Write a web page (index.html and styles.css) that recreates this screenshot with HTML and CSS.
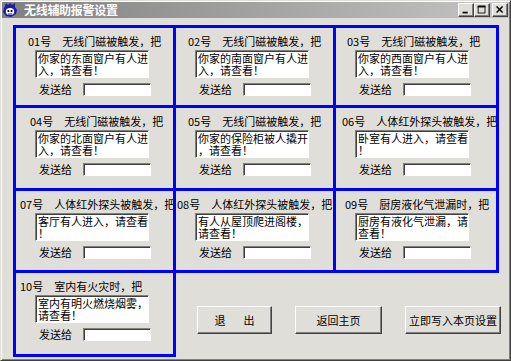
FILE: index.html
```html
<!DOCTYPE html>
<html lang="zh-CN">
<head>
<meta charset="utf-8">
<title>无线辅助报警设置</title>
<link rel="stylesheet" href="styles.css">
</head>
<body>
<div class="window">
  <div class="titlebar">
    <svg class="app-icon" viewBox="0 0 14 14" aria-hidden="true">
      <path d="M2 3 L3 0 L5 2 L7 0 L9 2 L12 0 L12 4 L14 7 L13 11 L8 14 L3 13 L0 9 L1 5 Z" fill="#1c1ca8"/>
      <ellipse cx="7" cy="8.5" rx="4.2" ry="3.6" fill="#fff"/>
      <circle cx="5.4" cy="8" r="1.1" fill="#000"/>
      <circle cx="8.6" cy="8" r="1.1" fill="#000"/>
      <path d="M5 11 L9 11" stroke="#1c1ca8" stroke-width="1"/>
    </svg>
    <span class="title">无线辅助报警设置</span>
    <div class="caption-btns">
      <span class="cbtn"><svg viewBox="0 0 16 14"><rect x="4" y="9" width="6" height="2" fill="#000"/></svg></span>
      <span class="cbtn"><svg viewBox="0 0 16 14"><rect x="3.5" y="2.5" width="8" height="8" fill="none" stroke="#000"/><rect x="3" y="2" width="9" height="2" fill="#000"/></svg></span>
      <span class="cbtn cbtn-close"><svg viewBox="0 0 16 14"><path d="M4 3 L11 10 M11 3 L4 10" stroke="#000" stroke-width="1.8"/></svg></span>
    </div>
  </div>

  <div class="grid">
    <section class="cell">
      <div class="lbl"><span class="num">01号</span>无线门磁被触发，把</div>
      <div class="memo">你家的东面窗户有人进入，请查看！</div>
      <div class="send"><span class="send-lbl">发送给</span><div class="field"></div></div>
    </section>
    <section class="cell">
      <div class="lbl"><span class="num">02号</span>无线门磁被触发，把</div>
      <div class="memo">你家的南面窗户有人进入，请查看！</div>
      <div class="send"><span class="send-lbl">发送给</span><div class="field"></div></div>
    </section>
    <section class="cell">
      <div class="lbl lbl-11"><span class="num">03号</span>无线门磁被触发，把</div>
      <div class="memo">你家的西面窗户有人进入，请查看！</div>
      <div class="send"><span class="send-lbl">发送给</span><div class="field"></div></div>
    </section>

    <section class="cell">
      <div class="lbl lbl-14"><span class="num">04号</span>无线门磁被触发，把</div>
      <div class="memo">你家的北面窗户有人进入，请查看！</div>
      <div class="send"><span class="send-lbl">发送给</span><div class="field"></div></div>
    </section>
    <section class="cell">
      <div class="lbl"><span class="num">05号</span>无线门磁被触发，把</div>
      <div class="memo">你家的保险柜被人撬开，请查看！</div>
      <div class="send"><span class="send-lbl">发送给</span><div class="field"></div></div>
    </section>
    <section class="cell">
      <div class="lbl lbl-6"><span class="num">06号</span>人体红外探头被触发，把</div>
      <div class="memo">卧室有人进入，请查看！</div>
      <div class="send"><span class="send-lbl">发送给</span><div class="field"></div></div>
    </section>

    <section class="cell">
      <div class="lbl lbl-4"><span class="num">07号</span>人体红外探头被触发，把</div>
      <div class="memo">客厅有人进入，请查看！</div>
      <div class="send"><span class="send-lbl">发送给</span><div class="field"></div></div>
    </section>
    <section class="cell">
      <div class="lbl lbl-1"><span class="num">08号</span>人体红外探头被触发，把</div>
      <div class="memo">有人从屋顶爬进阁楼，请查看！</div>
      <div class="send"><span class="send-lbl">发送给</span><div class="field"></div></div>
    </section>
    <section class="cell">
      <div class="lbl lbl-9"><span class="num">09号</span>厨房液化气泄漏时，把</div>
      <div class="memo">厨房有液化气泄漏，请查看！</div>
      <div class="send"><span class="send-lbl">发送给</span><div class="field"></div></div>
    </section>

    <section class="cell">
      <div class="lbl lbl-4"><span class="num">10号</span>室内有火灾时，把</div>
      <div class="memo">室内有明火燃烧烟雾，请查看！</div>
      <div class="send"><span class="send-lbl">发送给</span><div class="field"></div></div>
    </section>

    <div class="actions">
      <button class="btn btn-exit">退<span class="sp"></span>出</button>
      <button class="btn btn-home">返回主页</button>
      <button class="btn btn-save">立即写入本页设置</button>
    </div>
  </div>
</div>
</body>
</html>
```

FILE: styles.css
```css
* {
  box-sizing: border-box;
}

html,
body {
  margin: 0;
  padding: 0;
}

body {
  width: 511px;
  height: 361px;
  overflow: hidden;
  background: #e0ded8;
  font-family: "Noto Sans CJK SC", "Noto Sans", sans-serif;
  font-size: 11px;
  color: #000;
}

.window {
  width: 511px;
  height: 361px;
  padding: 1px;
  background: #e0ded8;
  border: 1px solid;
  border-color: #e0ded8 #404040 #404040 #e0ded8;
  box-shadow: inset 1px 1px #ffffff, inset -1px -1px #808080;
}

/* title bar */
.titlebar {
  display: flex;
  align-items: center;
  height: 16px;
  padding: 0 1px 0 1px;
  background: linear-gradient(to right, #808080, #c4c4c4);
}

.app-icon {
  width: 14px;
  height: 14px;
  margin-right: 7px;
  flex: none;
}

.title {
  color: #fff;
  font-weight: bold;
  font-size: 12px;
  line-height: 16px;
  letter-spacing: -0.3px;
}

.caption-btns {
  margin-left: auto;
  display: flex;
}

.cbtn {
  width: 16px;
  height: 14px;
  background: #e0ded8;
  border: 1px solid;
  border-color: #ffffff #404040 #404040 #ffffff;
  box-shadow: inset -1px -1px #808080;
  display: flex;
}

.cbtn svg {
  width: 14px;
  height: 12px;
}

.cbtn-close {
  margin-left: 2px;
}

/* grid of alarm cells */
.grid {
  display: grid;
  grid-template-columns: 160px 160px 163px;
  grid-template-rows: 80px 83px 82px 84px;
  margin: 10px 0 0 14px;
}

.cell {
  margin: -3px 0 0 -3px;
  border: 3px solid #0000ff;
  padding-top: 7px;
}

.lbl {
  line-height: 13px;
  white-space: nowrap;
  margin-left: 12px;
}

.lbl-1 { margin-left: 1px; }
.lbl-4 { margin-left: 4px; }
.lbl-6 { margin-left: 6px; }
.lbl-9 { margin-left: 9px; }
.lbl-11 { margin-left: 11px; }
.lbl-14 { margin-left: 14px; }

.num {
  margin-right: 11px;
}

.memo {
  margin: 2px 0 0 19px;
  width: 114px;
  height: 28px;
  padding: 1px 0 0 2px;
  background: #fff;
  border: 1px solid;
  border-color: #808080 #ffffff #ffffff #808080;
  box-shadow: inset 1px 1px #404040;
  line-height: 12px;
  line-break: anywhere;
  overflow: hidden;
}

.send {
  display: flex;
  align-items: center;
  height: 13px;
  margin: 5px 0 0 23px;
}

.send-lbl {
  width: 44px;
  line-height: 13px;
}

.field {
  width: 68px;
  height: 13px;
  background: #fff;
  border: 1px solid;
  border-color: #808080 #ffffff #ffffff #808080;
  box-shadow: inset 1px 1px #404040;
}

/* action buttons */
.actions {
  grid-column: 2 / 4;
  grid-row: 4;
  display: flex;
  align-items: flex-start;
  gap: 23px;
  padding: 33px 0 0 21px;
}

.btn {
  height: 28px;
  padding: 0;
  font-family: inherit;
  font-size: 11px;
  color: #000;
  background: #e0ded8;
  border: 1px solid;
  border-color: #ffffff #404040 #404040 #ffffff;
  box-shadow: inset -1px -1px #808080;
  display: flex;
  align-items: center;
  justify-content: center;
  flex: none;
}

.btn-exit { width: 75px; }
.btn-home { width: 87px; }
.btn-save { width: 96px; }

.sp {
  display: inline-block;
  width: 18px;
}
```
